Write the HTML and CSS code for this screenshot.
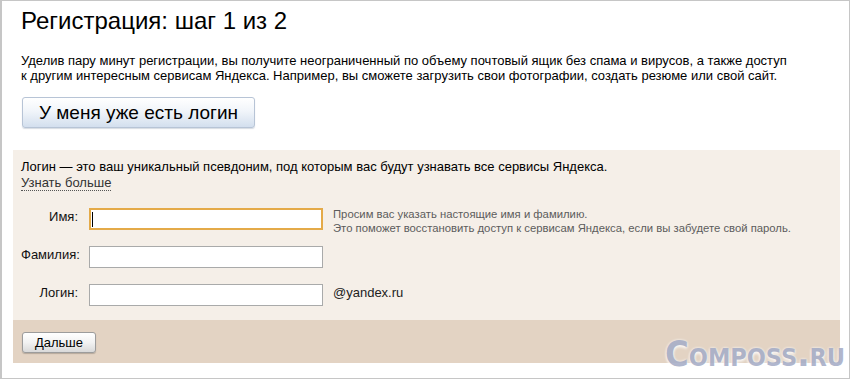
FILE: index.html
```html
<!DOCTYPE html>
<html lang="ru">
<head>
  <meta charset="UTF-8">
  <meta name="viewport" content="width=device-width, initial-scale=1.0">
  <title>Регистрация: шаг 1 из 2</title>
  <link rel="stylesheet" href="styles.css">
</head>
<body>
  <div class="frame">
    <div class="intro">
      <h1>Регистрация: шаг 1 из 2</h1>
      <p class="lead">Уделив пару минут регистрации, вы получите неограниченный по объему почтовый ящик без спама и вирусов, а также доступ<br>к другим интересным сервисам Яндекса. Например, вы сможете загрузить свои фотографии, создать резюме или свой сайт.</p>
      <button class="btn-login">У меня уже есть логин</button>
    </div>

    <form class="panel">
      <div class="panel-body">
        <p class="panel-note">Логин — это ваш уникальный псевдоним, под которым вас будут узнавать все сервисы Яндекса.<br><a href="#" class="more-link">Узнать больше</a></p>

        <div class="form-row">
          <label class="field-label" for="firstName">Имя:</label>
          <span class="field focused"><input id="firstName" type="text"></span>
          <p class="hint">Просим вас указать настоящие имя и фамилию.<br>Это поможет восстановить доступ к сервисам Яндекса, если вы забудете свой пароль.</p>
        </div>

        <div class="form-row">
          <label class="field-label" for="lastName">Фамилия:</label>
          <span class="field"><input id="lastName" type="text"></span>
        </div>

        <div class="form-row">
          <label class="field-label" for="login">Логин:</label>
          <span class="field"><input id="login" type="text"></span>
          <span class="suffix">@yandex.ru</span>
        </div>
      </div>

      <div class="panel-footer">
        <button type="button" class="btn-next">Дальше</button>
      </div>
    </form>

    <div class="watermark">Composs.ru</div>
  </div>
</body>
</html>
```

FILE: styles.css
```css
* {
  box-sizing: border-box;
  margin: 0;
  padding: 0;
}

body {
  background-color: #ffffff;
  font-family: "Liberation Sans", Arial, sans-serif;
  color: #000000;
}

.frame {
  position: relative;
  width: 850px;
  height: 379px;
  border: 1px solid #c6c6c6;
  border-left-width: 2px;
  padding: 0 9px 0 11px;
  overflow: hidden;
}

.intro {
  padding-left: 8px;
}

h1 {
  margin-top: 6px;
  font-size: 24px;
  line-height: 28px;
  font-weight: normal;
}

.lead {
  margin-top: 18px;
  font-size: 13px;
  line-height: 15px;
}

.btn-login {
  display: block;
  margin-top: 14px;
  margin-left: 1px;
  width: 233px;
  height: 31px;
  border: 1px solid #b7c4d6;
  border-radius: 3px;
  background: linear-gradient(#ffffff, #f1f5fa 45%, #d3dfee);
  box-shadow: 0 1px 1px rgba(90, 110, 140, 0.25);
  font-family: "Liberation Sans", Arial, sans-serif;
  font-size: 19px;
  color: #000000;
  cursor: pointer;
}

.panel {
  margin-top: 22px;
}

.panel-body {
  background-color: #f5efe8;
  padding: 9px 8px 14px;
}

.panel-note {
  font-size: 13px;
  line-height: 16px;
}

.more-link {
  color: #333333;
  text-decoration: none;
  border-bottom: 1px dotted #555555;
}

.form-row {
  display: flex;
  align-items: flex-start;
  height: 22px;
  margin-top: 16px;
}

.panel-note + .form-row {
  margin-top: 17px;
}

.field-label {
  width: 57px;
  padding-top: 1px;
  text-align: right;
  font-size: 13px;
  line-height: 15px;
  color: #111111;
}

.field {
  position: relative;
  display: block;
  margin-left: 11px;
  margin-right: 10px;
}

.field input {
  display: block;
  width: 234px;
  height: 22px;
  border: 1px solid #a9aaaa;
  background-color: #ffffff;
  font-family: "Liberation Sans", Arial, sans-serif;
  font-size: 13px;
  outline: none;
}

.field.focused input {
  border: 2px solid #e4aa48;
}

.field.focused::after {
  content: "";
  position: absolute;
  left: 3px;
  top: 4px;
  width: 1px;
  height: 15px;
  background-color: #000000;
}

.hint {
  margin-top: -1px;
  font-size: 11.3px;
  line-height: 14px;
  color: #5c5c5c;
  white-space: nowrap;
}

.suffix {
  padding-top: 1px;
  font-size: 13px;
  line-height: 15px;
  color: #222222;
}

.panel-footer {
  background-color: #e3d3c3;
  padding: 12px 9px 10px;
}

.btn-next {
  display: block;
  width: 74px;
  height: 21px;
  border: 1px solid #9c9c9c;
  border-radius: 3px;
  background: linear-gradient(#ffffff, #f2f2f2 50%, #d9d9d9);
  box-shadow: 0 1px 1px rgba(0, 0, 0, 0.2);
  font-family: "Liberation Sans", Arial, sans-serif;
  font-size: 13px;
  color: #000000;
  cursor: pointer;
}

.watermark {
  position: absolute;
  left: 663px;
  top: 333px;
  font-family: "DejaVu Sans Condensed", "DejaVu Sans", sans-serif;
  font-size: 36px;
  line-height: 40px;
  font-weight: bold;
  font-variant: small-caps;
  color: #a8afc8;
  text-shadow: 0 0 3px #ffffff, 0 2px 3px rgba(255, 255, 255, 0.9);
  opacity: 0.9;
}
```
